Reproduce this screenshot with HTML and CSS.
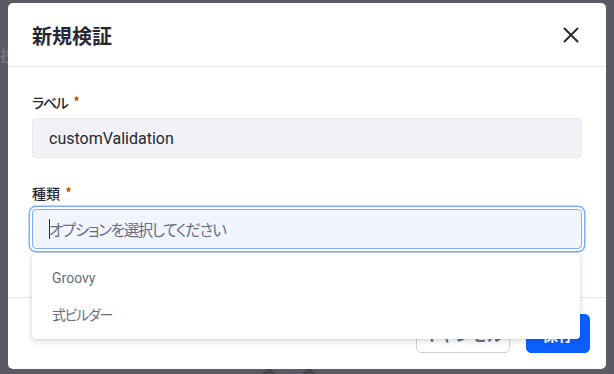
FILE: index.html
```html
<!DOCTYPE html>
<html lang="ja">
<head>
<meta charset="utf-8">
<link rel="stylesheet" href="styles.css">
</head>
<body>
<div class="page-behind">
  <span class="behind-text">投</span>
  <span class="behind-shape s1"></span>
  <span class="behind-shape s2"></span>
</div>
<div class="backdrop">
  <div class="modal">
    <div class="modal-header">
      <h1 class="modal-title">新規検証</h1>
      <button class="close" aria-label="閉じる">
        <svg width="16" height="16" viewBox="0 0 16 16"><path d="M1.5 1.5 L14.5 14.5 M14.5 1.5 L1.5 14.5" stroke="#272833" stroke-width="2" stroke-linecap="round" fill="none"/></svg>
      </button>
    </div>
    <div class="modal-body">
      <div class="form-group">
        <label class="label"><span class="kana">ラベル</span><span class="req"><svg width="7" height="7" viewBox="0 0 16 16"><path d="M8 0.5 L9.6 5.6 L15 5.6 L10.7 8.9 L12.5 15 L8 11.5 L3.5 15 L5.3 8.9 L1 5.6 L6.4 5.6 Z" fill="#b95000"/></svg></span></label>
        <div class="input">customValidation</div>
      </div>
      <div class="form-group">
        <label class="label">種類<span class="req"><svg width="7" height="7" viewBox="0 0 16 16"><path d="M8 0.5 L9.6 5.6 L15 5.6 L10.7 8.9 L12.5 15 L8 11.5 L3.5 15 L5.3 8.9 L1 5.6 L6.4 5.6 Z" fill="#b95000"/></svg></span></label>
        <div class="select-wrap">
          <div class="input focus"><span class="caret"></span><span class="placeholder">オプションを選択してください</span></div>
          <ul class="menu">
            <li class="menu-item">Groovy</li>
            <li class="menu-item"><span class="kana">式ビルダー</span></li>
          </ul>
        </div>
      </div>
    </div>
    <div class="modal-footer">
      <button class="btn btn-secondary">キャンセル</button>
      <button class="btn btn-primary">保存</button>
    </div>
  </div>
</div>
</body>
</html>
```

FILE: styles.css
```css
* { box-sizing: border-box; }
html, body {
  margin: 0;
  width: 614px;
  height: 374px;
  overflow: hidden;
}
body {
  position: relative;
  background: #5b5a64;
  font-family: Roboto, "Noto Sans CJK JP", sans-serif;
  font-feature-settings: "palt";
  color: #272833;
}
.page-behind {
  position: absolute;
  inset: 0;
}
.behind-text {
  position: absolute;
  left: 0;
  top: 42px;
  font-size: 16px;
  color: #7b7a82;
  font-family: "Noto Sans CJK JP", sans-serif;
}
.behind-shape {
  position: absolute;
  top: 370px;
  width: 14px;
  height: 14px;
  background: #45444c;
  transform: rotate(45deg);
}
.s1 { left: 262px; }
.s2 { left: 302px; }
.backdrop {
  position: relative;
  padding: 3px 8px 0 8px;
}
.modal {
  width: 598px;
  height: 366px;
  background: #fff;
  border-radius: 5px;
  display: flex;
  flex-direction: column;
}
.modal-header {
  height: 64px;
  flex: none;
  display: flex;
  align-items: center;
  justify-content: space-between;
  padding: 0 19px 0 24px;
  border-bottom: 1px solid #e7e7ed;
}
.modal-title {
  margin: 0;
  font-size: 20px;
  font-weight: 700;
  font-family: "Noto Sans CJK JP", sans-serif;
  font-feature-settings: normal;
  color: #272833;
  line-height: 1;
  position: relative;
  top: 1px;
}
.close {
  width: 32px;
  height: 32px;
  border: 0;
  background: transparent;
  padding: 0;
  display: flex;
  align-items: center;
  justify-content: center;
}
.modal-body {
  flex: 1;
  padding: 24px 24px 0 24px;
}
.form-group {
  margin-bottom: 24px;
}
.label {
  display: block;
  font-size: 14px;
  line-height: 21px;
  height: 27px;
  font-family: "Noto Sans CJK JP", sans-serif;
  font-weight: 500;
  color: #272833;
  padding-top: 1px;
}
.kana {
  letter-spacing: -1.3px;
}
.req {
  display: inline-block;
  margin-left: 5px;
  vertical-align: 6px;
  line-height: 0;
}
.input {
  height: 40px;
  border: 1px solid #e7e7ed;
  background: #f1f2f5;
  border-radius: 4px;
  padding: 0 16px;
  display: flex;
  align-items: center;
  font-size: 16px;
  color: #272833;
}
.select-wrap {
  position: relative;
}
.input.focus {
  background: #f0f5ff;
  border-color: #80acff;
  box-shadow: 0 0 0 2px #fff, 0 0 0 3.5px #80acff;
}
.caret {
  width: 1px;
  height: 20px;
  background: #272833;
  margin-right: -1px;
}
.placeholder {
  color: #6b6c7e;
  font-family: "Noto Sans CJK JP", sans-serif;
  font-size: 15.5px;
  letter-spacing: -1.3px;
}
.menu {
  position: absolute;
  left: 0;
  top: 44px;
  width: 548px;
  margin: 0;
  padding: 7px 0;
  list-style: none;
  background: #fff;
  border-radius: 4px;
  box-shadow: 0 2px 6px rgba(39, 40, 51, 0.18), 0 0 1px rgba(39, 40, 51, 0.2);
  z-index: 5;
}
.menu-item {
  height: 36px;
  display: flex;
  align-items: center;
  padding: 0 20px;
  font-size: 14px;
  color: #6b6c7e;
  font-family: Roboto, "Noto Sans CJK JP", sans-serif;
}
.modal-footer {
  flex: none;
  border-top: 1px solid #e7e7ed;
  padding: 16px;
  display: flex;
  justify-content: flex-end;
  gap: 16px;
}
.btn {
  height: 39px;
  border-radius: 5px;
  font-size: 16px;
  font-family: "Noto Sans CJK JP", sans-serif;
  font-weight: 600;
  padding: 0;
  white-space: nowrap;
}
.btn-secondary {
  width: 94px;
  background: #fff;
  border: 1px solid #cdced9;
  color: #6b6c7e;
}
.btn-primary {
  width: 64px;
  background: #0b5fff;
  border: 1px solid #0b5fff;
  color: #fff;
}
```
